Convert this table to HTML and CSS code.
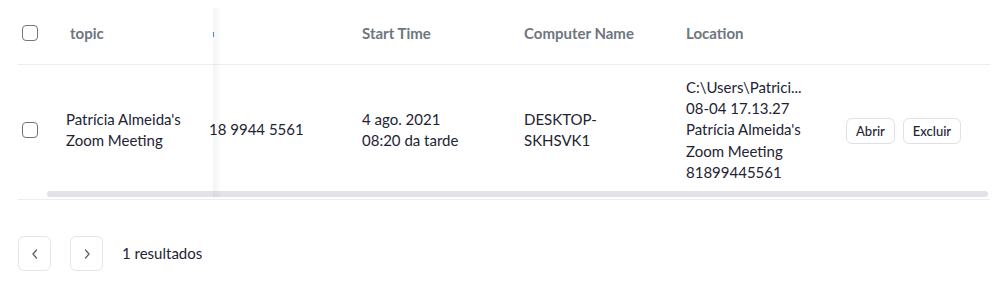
FILE: index.html
```html
<!DOCTYPE html>
<html lang="pt">
<head>
<meta charset="utf-8">
<title>Gravações</title>
<link rel="stylesheet" href="styles.css">
</head>
<body>
<div class="page">
  <div class="table-wrap">
    <div class="row head">
      <div class="cell cell-check"><span class="checkbox"></span></div>
      <div class="cell cell-topic"><span class="head-label">topic</span></div>
      <div class="cell cell-phone"><span class="sort-mark"></span></div>
      <div class="cell">Start Time</div>
      <div class="cell">Computer Name</div>
      <div class="cell">Location</div>
      <div class="cell"></div>
    </div>
    <div class="row body">
      <div class="cell cell-check"><span class="checkbox"></span></div>
      <div class="cell cell-topic">Patrícia Almeida's<br>Zoom Meeting</div>
      <div class="cell cell-phone">18 9944 5561</div>
      <div class="cell">4 ago. 2021<br>08:20 da tarde</div>
      <div class="cell">DESKTOP-<br>SKHSVK1</div>
      <div class="cell">C:\Users\Patrici...<br>08-04 17.13.27<br>Patrícia Almeida's<br>Zoom Meeting<br>81899445561</div>
      <div class="cell cell-actions">
        <button class="btn">Abrir</button>
        <button class="btn">Excluir</button>
      </div>
    </div>
    <div class="scrollbar"></div>
    <div class="sticky-shadow"></div>
  </div>
  <div class="pager">
    <button class="page-btn" aria-label="Anterior">
      <svg width="10" height="12" viewBox="0 0 10 12"><path d="M6.5 2 L3 6 L6.5 10" fill="none" stroke="#5b6270" stroke-width="1.3" stroke-linecap="round" stroke-linejoin="round"/></svg>
    </button>
    <button class="page-btn" aria-label="Próximo">
      <svg width="10" height="12" viewBox="0 0 10 12"><path d="M3.5 2 L7 6 L3.5 10" fill="none" stroke="#5b6270" stroke-width="1.3" stroke-linecap="round" stroke-linejoin="round"/></svg>
    </button>
    <span class="results">1 resultados</span>
  </div>
</div>
</body>
</html>
```

FILE: styles.css
```css
html, body {
  margin: 0;
  padding: 0;
  background: #ffffff;
}

body {
  font-family: Lato, "Noto Sans", sans-serif;
  font-size: 15px;
  color: #232333;
}

.page {
  padding: 8px 12px 0 18px;
}

.table-wrap {
  position: relative;
  width: 972px;
  border-bottom: 1px solid #ededf0;
}

.row {
  display: grid;
  grid-template-columns: 48px 143px 153px 162px 162px 161px 1fr;
  align-items: center;
  box-sizing: border-box;
}

.row.head {
  height: 57px;
  padding-bottom: 6px;
  border-bottom: 1px solid #ededf0;
  font-weight: 700;
  color: #6e7680;
}

.row.body {
  height: 126px;
  padding-top: 4px;
  line-height: 21.3px;
}

.cell {
  white-space: nowrap;
}

.cell-check {
  display: flex;
  align-items: center;
}

.checkbox {
  display: block;
  width: 14px;
  height: 14px;
  margin-left: 4px;
  border: 1.5px solid #6e7680;
  border-radius: 4px;
  box-sizing: content-box;
}

.head-label {
  padding-left: 4px;
}

.cell-phone {
  position: relative;
  height: 100%;
  display: flex;
  align-items: center;
}

.row.head .cell-phone {
  height: 50px;
}

.sort-mark {
  position: absolute;
  left: 4px;
  top: 24px;
  width: 1px;
  height: 5px;
  background: #4a88d0;
}

.cell-actions {
  display: flex;
  gap: 8px;
  margin-left: -1px;
}

.btn {
  font-family: Lato, "Noto Sans", sans-serif;
  font-size: 13px;
  font-weight: 500;
  color: #232333;
  background: #ffffff;
  border: 1px solid #dfe1e5;
  border-radius: 6px;
  height: 26px;
  padding: 0 9px;
  margin-top: 1px;
}

.scrollbar {
  margin-left: 29px;
  width: 941px;
  height: 6px;
  border-radius: 3px;
  background: #e1e3e7;
  margin-bottom: 2px;
}

.sticky-shadow {
  position: absolute;
  left: 195px;
  top: 0;
  bottom: 1px;
  width: 9px;
  background: linear-gradient(to right, rgba(0, 0, 0, 0.045), rgba(0, 0, 0, 0));
  pointer-events: none;
}

.pager {
  display: flex;
  align-items: center;
  gap: 19px;
  margin-top: 36px;
}

.page-btn {
  width: 33px;
  height: 35px;
  border: 1px solid #e3e5e8;
  border-radius: 6px;
  background: #ffffff;
  display: flex;
  align-items: center;
  justify-content: center;
  padding: 0;
}

.results {
  color: #232333;
  font-size: 15px;
  margin-top: -2px;
}
```
